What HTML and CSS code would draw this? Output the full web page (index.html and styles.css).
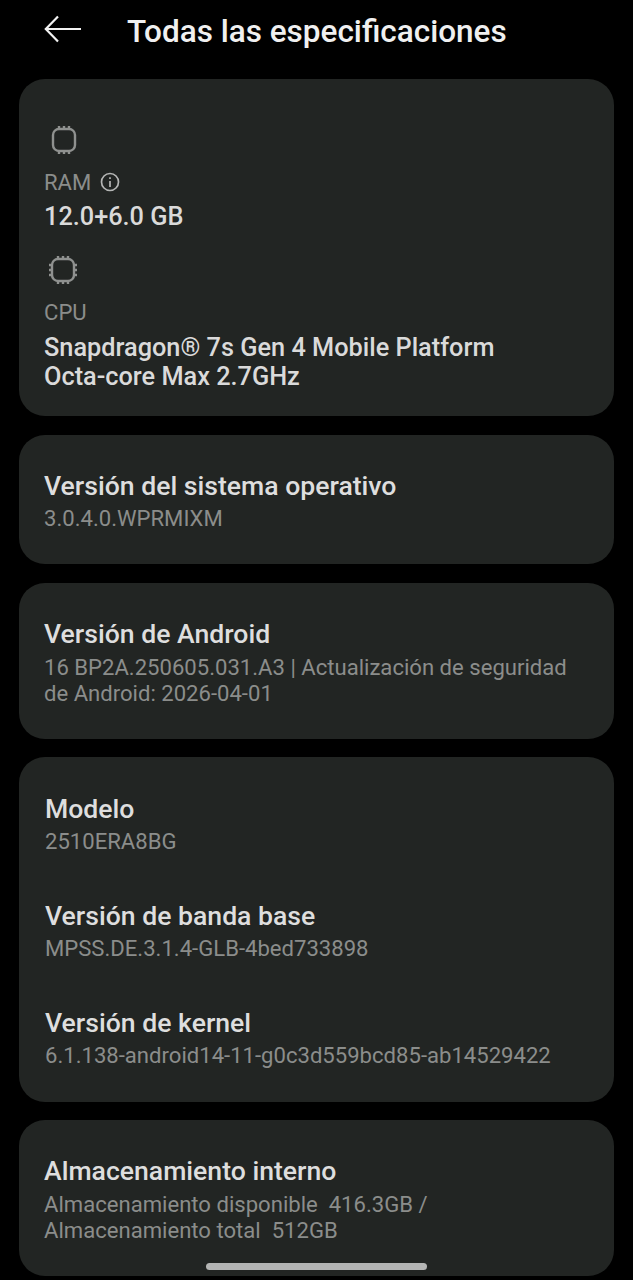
FILE: index.html
```html
<!DOCTYPE html>
<html lang="es">
<head>
	<meta charset="UTF-8">
	<title>Todas las especificaciones</title>
	<link rel="stylesheet" href="styles.css">
</head>
<body>
	<div class="phone">
		<header class="top">
			<svg class="back" width="38" height="28" viewBox="0 0 38 28" fill="none" stroke="#f2f2f2" stroke-width="2.2"><path d="M37 14H2M14 1.500 1.800 14 14 26.500"/></svg>
			<h1>Todas las especificaciones</h1>
		</header>

		<section class="card card-hw">
			<svg class="chip" width="26" height="30" viewBox="0 0 26 30" fill="none" stroke="#8f918f" stroke-width="2.400"><rect x="2" y="4" width="22" height="22" rx="6"/><path d="M8 1v3M13 1v3M18 1v3M8 26v3M13 26v3M18 26v3"/></svg>
			<div class="label">RAM
				<svg class="info" width="20" height="20" viewBox="0 0 20 20" fill="none" stroke="#b5b6b5" stroke-width="1.700"><circle cx="10" cy="10" r="8.500"/><path d="M10 9v6M10 5.200v1.800"/></svg>
			</div>
			<div class="value">12.0+6.0 GB</div>
			<svg class="chip chip-cpu" width="30" height="30" viewBox="0 0 30 30" fill="none" stroke="#8f918f" stroke-width="2.400"><rect x="4" y="4" width="22" height="22" rx="6"/><path d="M10 1v3M15 1v3M20 1v3M10 26v3M15 26v3M20 26v3M1 10h3M1 15h3M1 20h3M26 10h3M26 15h3M26 20h3"/></svg>
			<div class="label">CPU</div>
			<div class="value value-lines">Snapdragon® 7s Gen 4 Mobile Platform<br>Octa-core Max 2.7GHz</div>
		</section>

		<section class="card card-os">
			<h2>Versión del sistema operativo</h2>
			<p>3.0.4.0.WPRMIXM</p>
		</section>

		<section class="card card-android">
			<h2>Versión de Android</h2>
			<p>16 BP2A.250605.031.A3 | Actualización de seguridad<br>de Android: 2026-04-01</p>
		</section>

		<section class="card card-list">
			<div class="item">
				<h2>Modelo</h2>
				<p>2510ERA8BG</p>
			</div>
			<div class="item">
				<h2>Versión de banda base</h2>
				<p>MPSS.DE.3.1.4-GLB-4bed733898</p>
			</div>
			<div class="item">
				<h2>Versión de kernel</h2>
				<p>6.1.138-android14-11-g0c3d559bcd85-ab14529422</p>
			</div>
		</section>

		<section class="card card-storage">
			<h2>Almacenamiento interno</h2>
			<p>Almacenamiento disponible&nbsp; 416.3GB /<br>Almacenamiento total&nbsp; 512GB</p>
		</section>

		<div class="home-bar"></div>
	</div>
</body>
</html>
```

FILE: styles.css
```css
*{margin:0;padding:0;box-sizing:border-box;font-family:Roboto,"Liberation Sans",sans-serif;}
html,body{background:#000;}
.phone{position:relative;width:633px;height:1280px;overflow:hidden;padding:0 19px;display:flex;flex-direction:column;gap:19px;}

.top{height:60px;display:flex;align-items:center;padding-left:25px;gap:45px;}
.back{flex:none;margin-top:-2px;}
.top h1{font-size:31.500px;font-weight:500;color:#f0f0f0;line-height:62px;padding-top:3px;}

.card{background:#222523;border-radius:26px;width:595px;padding:0 25px;}
.card h2{font-size:26.600px;font-weight:500;color:#dedede;line-height:32px;}
.card p{font-size:22.100px;font-weight:400;color:#8b8d8b;line-height:26px;}

.card-hw{height:337px;padding-top:46px;}
.chip{display:block;margin-left:7px;}
.label{display:flex;align-items:center;gap:9px;height:26px;margin-top:14px;font-size:22.100px;color:#8b8d8b;}
.value{font-size:25.300px;font-weight:500;color:#dadada;line-height:30px;margin-top:7px;}
.value-lines{line-height:29px;margin-top:8px;}
.chip-cpu{margin:23px 0 0 4px;}

.card-os{height:129px;padding-top:35px;}
.card-os p{margin-top:3px;}
.card-android{height:156px;padding-top:35px;}
.card-android p{margin-top:4px;}

.card-list{height:345px;padding:36px 25px 0 26px;display:flex;flex-direction:column;gap:46px;margin-top:-1px;}
.item p{margin-top:3px;}

.card-storage{height:156px;padding-top:35px;margin-top:-1px;}
.card-storage p{margin-top:4px;}

.home-bar{position:absolute;left:206px;bottom:10px;width:221px;height:7px;border-radius:4px;background:#b4b5b4;}
```
